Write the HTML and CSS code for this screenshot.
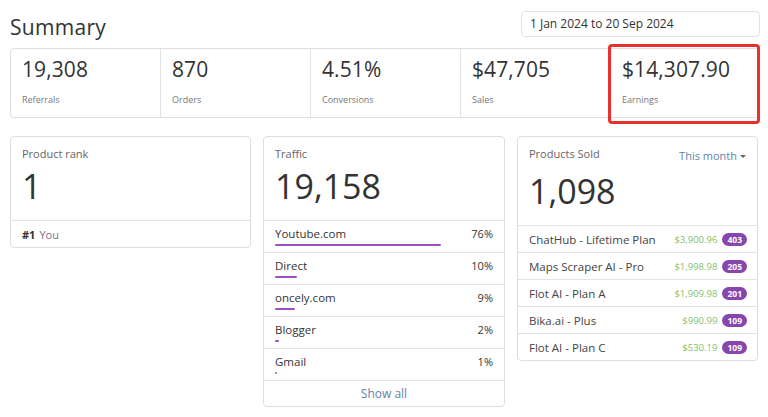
FILE: index.html
```html
<!DOCTYPE html>
<html>
<head>
<meta charset="utf-8">
<link rel="stylesheet" href="styles.css">
</head>
<body>
<div class="page">
  <div class="header">
    <h1 class="title">Summary</h1>
    <div class="date">1 Jan 2024 to 20 Sep 2024</div>
  </div>
  <div class="stats">
    <div class="stat"><div class="stat-value">19,308</div><div class="stat-label">Referrals</div></div>
    <div class="stat"><div class="stat-value">870</div><div class="stat-label">Orders</div></div>
    <div class="stat"><div class="stat-value">4.51%</div><div class="stat-label">Conversions</div></div>
    <div class="stat"><div class="stat-value">$47,705</div><div class="stat-label">Sales</div></div>
    <div class="stat stat-highlight"><div class="stat-value">$14,307.90</div><div class="stat-label">Earnings</div></div>
  </div>
  <div class="cards">
    <div class="card">
      <div class="card-head">
        <div class="card-title">Product rank</div>
        <div class="big">1</div>
      </div>
      <div class="rank-row"><b>#1</b> <span class="you">You</span></div>
    </div>
    <div class="card">
      <div class="card-head">
        <div class="card-title">Traffic</div>
        <div class="big">19,158</div>
      </div>
      <div class="traffic-row">
        <div class="traffic-line"><span>Youtube.com</span><span>76%</span></div>
        <div class="bar"><div class="bar-fill" style="width:76%"></div></div>
      </div>
      <div class="traffic-row">
        <div class="traffic-line"><span>Direct</span><span>10%</span></div>
        <div class="bar"><div class="bar-fill" style="width:10%"></div></div>
      </div>
      <div class="traffic-row">
        <div class="traffic-line"><span>oncely.com</span><span>9%</span></div>
        <div class="bar"><div class="bar-fill" style="width:9%"></div></div>
      </div>
      <div class="traffic-row">
        <div class="traffic-line"><span>Blogger</span><span>2%</span></div>
        <div class="bar"><div class="bar-fill" style="width:2%"></div></div>
      </div>
      <div class="traffic-row">
        <div class="traffic-line"><span>Gmail</span><span>1%</span></div>
        <div class="bar"><div class="bar-fill" style="width:1%"></div></div>
      </div>
      <div class="show-all">Show all</div>
    </div>
    <div class="card card-products">
      <div class="card-head">
        <div class="products-top">
          <div class="card-title">Products Sold</div>
          <div class="month">This month <span class="caret"></span></div>
        </div>
        <div class="big">1,098</div>
      </div>
      <div class="product-row"><span class="pname">ChatHub - Lifetime Plan</span><span class="pright"><span class="price">$3,900.96</span><span class="badge">403</span></span></div>
      <div class="product-row"><span class="pname">Maps Scraper AI - Pro</span><span class="pright"><span class="price">$1,998.98</span><span class="badge">205</span></span></div>
      <div class="product-row"><span class="pname">Flot AI - Plan A</span><span class="pright"><span class="price">$1,909.98</span><span class="badge">201</span></span></div>
      <div class="product-row"><span class="pname">Bika.ai - Plus</span><span class="pright"><span class="price">$990.99</span><span class="badge">109</span></span></div>
      <div class="product-row"><span class="pname">Flot AI - Plan C</span><span class="pright"><span class="price">$530.19</span><span class="badge">109</span></span></div>
    </div>
  </div>
</div>
</body>
</html>
```

FILE: styles.css
```css
* { box-sizing: border-box; }
html, body { margin: 0; padding: 0; background: #fff; }
body {
  font-family: "Open Sans", "DejaVu Sans", sans-serif;
  color: #333;
  width: 768px;
  height: 417px;
  overflow: hidden;
}
.page { padding: 11px 9px 0 10px; }
.header {
  display: flex;
  justify-content: space-between;
  align-items: center;
  height: 25px;
  margin-bottom: 12px;
}
.title {
  margin: 6px 0 0 0;
  font-size: 21px;
  font-weight: 400;
  color: #333;
  line-height: 26px;
  letter-spacing: 0.3px;
}
.date {
  width: 239px;
  height: 26px;
  margin-right: -1px;
  border: 1px solid #e3e3e3;
  border-radius: 4px;
  font-size: 12px;
  line-height: 24px;
  padding-left: 8px;
  color: #333;
}
.stats {
  display: grid;
  grid-template-columns: 149px 150px 150px 150px 1fr;
  grid-template-rows: 100%;
  border: 1px solid #dedede;
  border-radius: 4px;
  height: 70px;
}
.stat {
  padding: 8px 0 0 11px;
  border-left: 1px solid #e3e3e3;
}
.stat:first-child { border-left: none; }
.stat-value {
  font-size: 21px;
  line-height: 25px;
  color: #333;
  letter-spacing: 0.1px;
}
.stat-label {
  margin-top: 12px;
  font-size: 9px;
  line-height: 12px;
  color: #777;
}
.stat-highlight { position: relative; }
.stat-highlight::after {
  content: "";
  position: absolute;
  top: -5px;
  bottom: -7px;
  left: -3px;
  right: -2px;
  border: 3px solid #e8332c;
  border-radius: 4px;
}
.cards {
  display: grid;
  grid-template-columns: 241px 242px 241px;
  gap: 12px;
  margin-top: 18px;
  align-items: start;
}
.card {
  border: 1px solid #dedede;
  border-radius: 4px;
  background: #fff;
}
.card-head { padding: 10px 11px 11px 11px; }
.card-title {
  font-size: 11px;
  line-height: 14px;
  color: #666;
}
.big {
  margin-top: 2px;
  font-size: 34px;
  line-height: 46px;
  color: #333;
}
.rank-row {
  border-top: 1px solid #e3e3e3;
  height: 27px;
  padding: 0 11px;
  display: flex;
  align-items: center;
  gap: 4px;
  font-size: 11px;
  color: #333;
}
.rank-row b { font-weight: 700; }
.you { color: #7d6a92; }
.traffic-row {
  border-top: 1px solid #e3e3e3;
  padding: 6px 11px 6px 11px;
}
.traffic-line {
  display: flex;
  justify-content: space-between;
  font-size: 11.5px;
  line-height: 14px;
  color: #333;
}
.traffic-line span:last-child { font-size: 11px; }
.bar { margin-top: 3px; height: 2px; }
.bar-fill { height: 2px; background: #9b4fc1; border-radius: 1px; }
.show-all {
  border-top: 1px solid #e3e3e3;
  height: 26px;
  text-align: center;
  font-size: 12px;
  line-height: 25px;
  color: #6583a8;
}
.products-top {
  display: flex;
  justify-content: space-between;
  align-items: flex-start;
  height: 19px;
}
.month {
  font-size: 11px;
  line-height: 14px;
  margin-top: 2px;
  color: #5f7fa6;
  display: flex;
  align-items: center;
  gap: 3px;
}
.caret {
  width: 0;
  height: 0;
  border-left: 3px solid transparent;
  border-right: 3px solid transparent;
  border-top: 3px solid #666;
}
.product-row {
  border-top: 1px solid #e3e3e3;
  height: 27px;
  padding: 0 10px 0 11px;
  display: flex;
  justify-content: space-between;
  align-items: center;
}
.pname {
  font-size: 11.5px;
  color: #444;
}
.pright { display: flex; align-items: center; gap: 5px; }
.price {
  font-size: 9.5px;
  color: #86c06a;
}
.badge {
  background: #8746ad;
  color: #fff;
  font-size: 8.5px;
  font-weight: 700;
  line-height: 13px;
  padding: 0 5px;
  border-radius: 7px;
}
```
